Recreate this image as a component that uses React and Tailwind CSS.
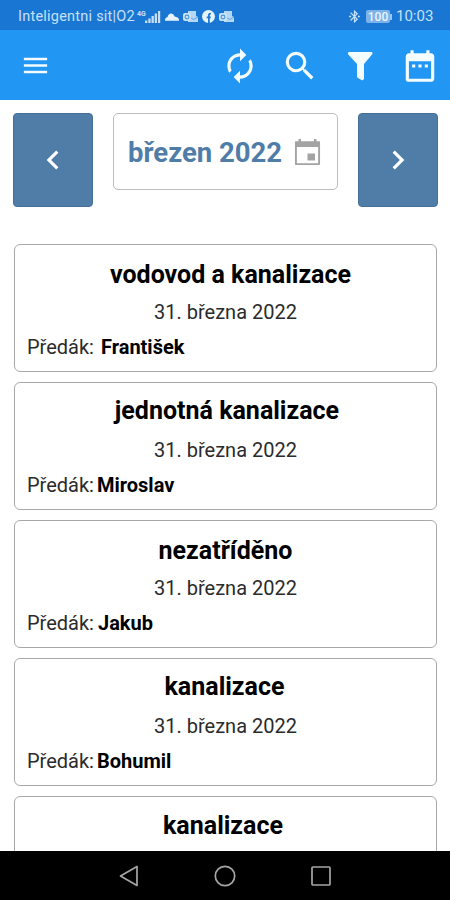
import React from 'react';
import {
    MdAutorenew,
    MdBluetoothConnected,
    MdChevronLeft,
    MdChevronRight,
    MdDateRange,
    MdMenu,
    MdSearch,
} from 'react-icons/md';

const jobs = [
    { id: 1, title: 'vodovod a kanalizace', date: '31. března 2022', foreman: 'František', titleClass: 'pt-[15px] pl-[10px]', nameClass: 'ml-[7px]' },
    { id: 2, title: 'jednotná kanalizace', date: '31. března 2022', foreman: 'Miroslav', titleClass: 'pt-[13px] pl-[3px]', nameClass: 'ml-[3px]' },
    { id: 3, title: 'nezatříděno', date: '31. března 2022', foreman: 'Jakub', titleClass: 'pt-[15px]', nameClass: 'ml-[4px]' },
    { id: 4, title: 'kanalizace', date: '31. března 2022', foreman: 'Bohumil', titleClass: 'pt-[13px] pr-[2px]', nameClass: 'ml-[3px]' },
    { id: 5, title: 'kanalizace', titleClass: 'pt-[14px] pr-[5px]' },
];

function SignalIcon() {
    return (
        <svg width="24" height="14" viewBox="0 0 24 14" fill="currentColor" className="ml-[1px]">
            <text x="0" y="6" fontSize="7" fontWeight="700">4G</text>
            <path d="M8 10.5h2.300V13H8zM11.300 8.500h2.300V13h-2.300zM14.500 6h2.300v7h-2.300zM17.700 3.500H20V13h-2.300zM21 1h2.200v12H21z" />
        </svg>
    );
}

function CloudIcon() {
    return (
        <svg width="14" height="10" viewBox="0 0 14 10" fill="currentColor">
            <path d="M0 8Q0 5.500 2.500 5 3.500 1.500 6 1.500 8.500 1.500 9.500 4.500 14 5 14 8v.8H0z" />
        </svg>
    );
}

function OutlookIcon() {
    return (
        <svg width="15" height="13" viewBox="0 0 15 13" fill="none">
            <path d="M5 1h8v5l2 1v5H5z" fill="#b4d7f5" />
            <path d="M6 6.500l4.500 3L15 7" stroke="#5fa3e3" />
            <rect y="3" width="8" height="8" rx="2" fill="#c8e2f8" />
            <circle cx="4" cy="7" r="1.900" stroke="#4a94dc" strokeWidth="1.100" />
        </svg>
    );
}

function FacebookIcon() {
    return (
        <svg width="13" height="13" viewBox="0 0 13 13">
            <circle cx="6.5" cy="6.5" r="6.5" fill="#e6f3fd" />
            <path d="M6.9 13V5.2q0-1.6 2-1.5M4.7 7.3h4" fill="none" stroke="#1976d2" strokeWidth="1.7" />
        </svg>
    );
}

function CalendarIcon() {
    return (
        <svg width="27" height="29" viewBox="0 0 27 29" fill="none" className="mb-[2px] ml-[12px] text-[#a3a3a3]">
            <path d="M1.900 4.500h23.200v21.600H1.900z" stroke="currentColor" strokeWidth="1.900" strokeLinejoin="round" />
            <path d="M1 3.500h25V9H1zM4.500 1H7v3H4.500zM20 1h2.500v3H20zM13.500 15.500h7.500v7h-7.500z" fill="currentColor" />
        </svg>
    );
}

function StatusBar() {
    return (
        <div className="flex h-[30px] shrink-0 items-center bg-[#1976d2] pt-[3px] pr-[17px] pl-[18px] text-[#c5e0f8]">
            <span className="w-[118px] text-[14.5px] tracking-[0.23px] whitespace-nowrap">Inteligentni sit|O2</span>
            <SignalIcon />
            <div className="ml-[4px] flex items-center gap-1 text-[#e6f3fd]">
                <CloudIcon />
                <OutlookIcon />
                <FacebookIcon />
                <OutlookIcon />
            </div>
            <MdBluetoothConnected size={15} className="ml-auto" />
            <div className="ml-[4px] flex items-center">
                <span className="flex h-[13px] w-[24px] items-center justify-center rounded-[2px] bg-[#7db3ea] text-[12px] font-medium text-[#e9f5ff]">100</span>
                <span className="h-[6px] w-[2px] bg-[#9bc8f2]" />
            </div>
            <span className="ml-[4px] w-[37px] text-[15px] whitespace-nowrap">10:03</span>
        </div>
    );
}

function AppBar() {
    return (
        <header className="flex h-[70px] shrink-0 items-center bg-[#2196f3] pt-px pr-[11px] pl-[20px] text-[#f4fcff]">
            <button><MdMenu size={31} /></button>
            <div className="ml-auto flex items-center">
                <button><MdAutorenew size={38} /></button>
                <button className="ml-[22px]"><MdSearch size={38} /></button>
                <button className="ml-[28px]">
                    <svg width="27" height="30" viewBox="0 0 27 30" fill="currentColor">
                        <path d="M2 1h23q1.500 1-.2 2.800L17 13v14.500q-.5 2.500-2.500 1.500l-3.500-2q-1-.6-1-2V13L1.500 3.800Q0 2 2 1z" />
                    </svg>
                </button>
                <button className="ml-[27px]"><MdDateRange size={38} /></button>
            </div>
        </header>
    );
}

function MonthPicker() {
    return (
        <div className="flex items-start justify-between pt-[13px] pr-[12px] pl-[13px]">
            <button className="flex h-[94px] w-[80px] items-center justify-center rounded-[4px] border border-[#456f98] bg-[#507da8] text-white">
                <MdChevronLeft size={38} />
            </button>
            <div className="flex h-[77px] w-[225px] items-center rounded-[5px] border-[1.5px] border-[#bdbdbd] pt-[3px] pl-[14px]">
                <span className="w-[154px] text-[27.5px] font-bold whitespace-nowrap text-[#507da8]">březen 2022</span>
                <CalendarIcon />
            </div>
            <button className="flex h-[94px] w-[80px] items-center justify-center rounded-[4px] border border-[#456f98] bg-[#507da8] text-white">
                <MdChevronRight size={38} />
            </button>
        </div>
    );
}

function JobCard({ job }) {
    return (
        <div className="flex h-[128px] shrink-0 flex-col rounded-[6px] border-[1.5px] border-[#a8a8a8]">
            <h2 className={`h-[50px] text-center text-[25px] leading-[30px] font-bold text-black ${job.titleClass}`}>{job.title}</h2>
            {job.date && (
                <p className="mt-[3px] text-center text-[20px] leading-[28px] text-[#2b2b2b]">{job.date}</p>
            )}
            {job.foreman && (
                <div className="mt-[7px] flex pl-[12px] text-[20px] leading-[28px] text-[#2b2b2b]">
                    <span>Předák:</span>
                    <span className={`font-bold text-black ${job.nameClass}`}>{job.foreman}</span>
                </div>
            )}
        </div>
    );
}

function NavBar() {
    return (
        <nav className="flex h-[49px] shrink-0 items-center justify-center gap-[75px] bg-black text-[#a6a6a6]">
            <svg width="20" height="22" viewBox="0 0 20 22" fill="none" stroke="currentColor" strokeWidth="1.7" strokeLinejoin="round">
                <path d="M18 1.500v19L1.500 11z" />
            </svg>
            <svg width="22" height="22" viewBox="0 0 22 22" fill="none" stroke="currentColor" strokeWidth="1.700">
                <circle cx="11" cy="11" r="9.700" />
            </svg>
            <svg width="20" height="20" viewBox="0 0 20 20" fill="none" stroke="currentColor" strokeWidth="1.700">
                <rect x="1" y="1" width="18" height="18" rx="1" />
            </svg>
        </nav>
    );
}

export default function App() {
    return (
        <div className="flex h-[900px] w-[450px] flex-col overflow-hidden bg-white font-['Roboto',sans-serif]">
            <StatusBar />
            <AppBar />
            <main className="flex min-h-0 flex-1 flex-col overflow-hidden">
                <MonthPicker />
                <div className="mt-[37px] flex flex-col gap-[10px] pr-[13px] pl-[14px]">
                    {jobs.map(job => (
                        <JobCard key={job.id} job={job} />
                    ))}
                </div>
            </main>
            <NavBar />
        </div>
    );
}
